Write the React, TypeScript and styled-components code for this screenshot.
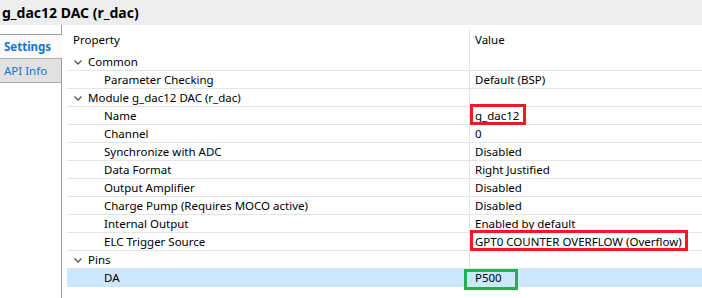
import styled, { createGlobalStyle } from "styled-components"

const GlobalStyle = createGlobalStyle`
    body {
        margin: 0;
        font-family: "Noto Sans", "Open Sans", sans-serif;
        font-size: 11.5px;
        color: #000;
        background: #fff;
    }
`

const Page = styled.div`
    width: 702px;
    height: 298px;
    display: flex;
    flex-direction: column;
    overflow: hidden;
`

const TitleBar = styled.div`
    height: 25px;
    flex: none;
    background: #eeeeee;
    display: flex;
    align-items: center;
    padding-left: 2px;
    font-size: 14px;
    font-weight: 700;
`

const Body = styled.div`
    flex: 1;
    display: flex;
`

const TabStrip = styled.div`
    width: 61px;
    flex: none;
    border-right: 1px solid #a0a0a0;
    padding-top: 9px;
    display: flex;
    flex-direction: column;
`

const Tab = styled.div<{ $active?: boolean }>`
    height: 23px;
    display: flex;
    align-items: center;
    padding-left: 4px;
    color: #1a73d0;
    font-weight: ${p => (p.$active ? 700 : 400)};
    background: ${p => (p.$active ? "#fafafa" : "#e1e1e1")};
    border-top: 1px solid ${p => (p.$active ? "#a0a0a0" : "#adadad")};
    border-bottom: ${p => (p.$active ? "none" : "1px solid #adadad")};
    margin-right: ${p => (p.$active ? "-1px" : "0")};
`

const Table = styled.div`
    flex: 1;
    margin-left: 5px;
    display: flex;
    flex-direction: column;
`

const Header = styled.div`
    height: 28px;
    display: grid;
    grid-template-columns: 402px 1fr;
`

const HeaderCell = styled.div<{ $divider?: boolean }>`
    display: flex;
    align-items: center;
    padding-left: ${p => (p.$divider ? "5px" : "6px")};
    margin-top: 5px;
    border-left: ${p => (p.$divider ? "1px solid #e3e3e3" : "none")};
    padding-bottom: 4px;
`

const Row = styled.div<{ $selected?: boolean }>`
    height: 17px;
    display: grid;
    grid-template-columns: 402px 1fr;
    border-bottom: 1px solid ${p => (p.$selected ? "#cce8ff" : "#e5e5e5")};
    background: ${p => (p.$selected ? "#cce8ff" : "transparent")};
`

const PropCell = styled.div<{ $level: number }>`
    display: flex;
    align-items: center;
    gap: 5px;
    padding-left: ${p => (p.$level === 0 ? "6px" : "37px")};
    white-space: nowrap;
`

const ValueCell = styled.div`
    display: flex;
    align-items: center;
    padding-left: 5px;
    border-left: 1px solid #e3e3e3;
    white-space: nowrap;
`

const Mark = styled.span<{ $color: string; $t: number; $r: number; $b: number; $l: number }>`
    position: relative;
    display: inline-block;
    line-height: 17px;

    &::after {
        content: "";
        position: absolute;
        top: ${p => -p.$t}px;
        right: ${p => -p.$r}px;
        bottom: ${p => -p.$b}px;
        left: ${p => -p.$l}px;
        border: 3px solid ${p => p.$color};
    }
`

const Chevron = () => (
    <svg width="10" height="10" viewBox="0 0 10 10">
        <path d="M1.5 3.5 L5 7 L8.5 3.5" fill="none" stroke="#555" strokeWidth="1.3" />
    </svg>
)

type Item = {
    label: string
    value?: React.ReactNode
    group?: boolean
    selected?: boolean
}

const items: Item[] = [
    { label: "Common", group: true },
    { label: "Parameter Checking", value: "Default (BSP)" },
    { label: "Module g_dac12 DAC (r_dac)", group: true },
    {
        label: "Name",
        value: <Mark $color="#ec1c24" $t={3} $r={7} $b={1} $l={5}>g_dac12</Mark>,
    },
    { label: "Channel", value: "0" },
    { label: "Synchronize with ADC", value: "Disabled" },
    { label: "Data Format", value: "Right Justified" },
    { label: "Output Amplifier", value: "Disabled" },
    { label: "Charge Pump (Requires MOCO active)", value: "Disabled" },
    { label: "Internal Output", value: "Enabled by default" },
    {
        label: "ELC Trigger Source",
        value: <Mark $color="#ec1c24" $t={3} $r={6} $b={1} $l={5}>GPT0 COUNTER OVERFLOW (Overflow)</Mark>,
    },
    { label: "Pins", group: true },
    {
        label: "DA",
        selected: true,
        value: <Mark $color="#22b14c" $t={0} $r={16} $b={4} $l={11}>P500</Mark>,
    },
]

export default function App() {
    return (
        <Page>
            <GlobalStyle />
            <TitleBar>g_dac12 DAC (r_dac)</TitleBar>
            <Body>
                <TabStrip>
                    <Tab $active>Settings</Tab>
                    <Tab>API Info</Tab>
                </TabStrip>
                <Table>
                    <Header>
                        <HeaderCell>Property</HeaderCell>
                        <HeaderCell $divider>Value</HeaderCell>
                    </Header>
                    {items.map(item => (
                        <Row key={item.label} $selected={item.selected}>
                            <PropCell $level={item.group ? 0 : 1}>
                                {item.group && <Chevron />}
                                {item.label}
                            </PropCell>
                            <ValueCell>{item.value}</ValueCell>
                        </Row>
                    ))}
                </Table>
            </Body>
        </Page>
    )
}
